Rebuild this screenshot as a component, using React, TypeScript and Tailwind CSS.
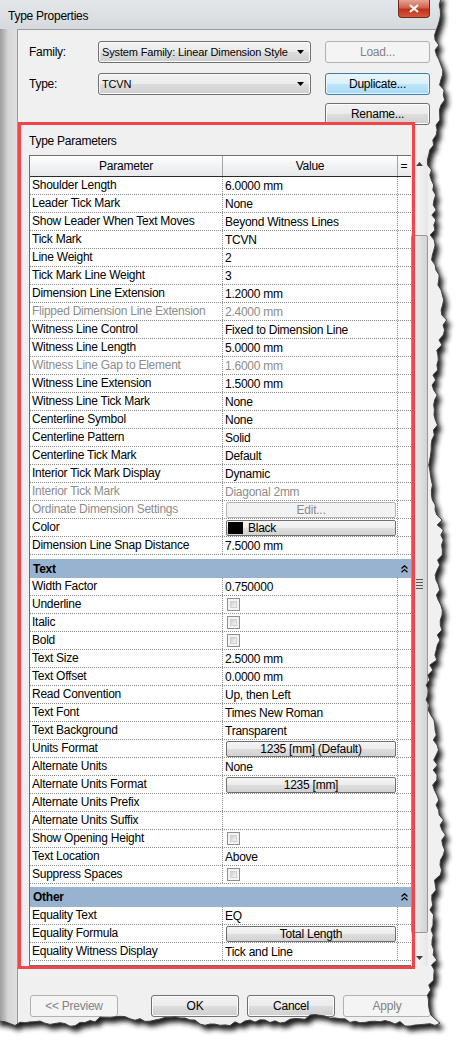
import React from 'react';

type Row =
  | { kind: 'group'; label: string; gap: string }
  | { kind: 'text'; label: string; value: string; disabled?: boolean }
  | { kind: 'check'; label: string }
  | { kind: 'button'; label: string; value: string; disabled?: boolean; swatch?: boolean };

const ROWS: Row[] = [
  { kind: 'text', label: 'Shoulder Length', value: '6.0000 mm' },
  { kind: 'text', label: 'Leader Tick Mark', value: 'None' },
  { kind: 'text', label: 'Show Leader When Text Moves', value: 'Beyond Witness Lines' },
  { kind: 'text', label: 'Tick Mark', value: 'TCVN' },
  { kind: 'text', label: 'Line Weight', value: '2' },
  { kind: 'text', label: 'Tick Mark Line Weight', value: '3' },
  { kind: 'text', label: 'Dimension Line Extension', value: '1.2000 mm' },
  { kind: 'text', label: 'Flipped Dimension Line Extension', value: '2.4000 mm', disabled: true },
  { kind: 'text', label: 'Witness Line Control', value: 'Fixed to Dimension Line' },
  { kind: 'text', label: 'Witness Line Length', value: '5.0000 mm' },
  { kind: 'text', label: 'Witness Line Gap to Element', value: '1.6000 mm', disabled: true },
  { kind: 'text', label: 'Witness Line Extension', value: '1.5000 mm' },
  { kind: 'text', label: 'Witness Line Tick Mark', value: 'None' },
  { kind: 'text', label: 'Centerline Symbol', value: 'None' },
  { kind: 'text', label: 'Centerline Pattern', value: 'Solid' },
  { kind: 'text', label: 'Centerline Tick Mark', value: 'Default' },
  { kind: 'text', label: 'Interior Tick Mark Display', value: 'Dynamic' },
  { kind: 'text', label: 'Interior Tick Mark', value: 'Diagonal 2mm', disabled: true },
  { kind: 'button', label: 'Ordinate Dimension Settings', value: 'Edit...', disabled: true },
  { kind: 'button', label: 'Color', value: 'Black', swatch: true },
  { kind: 'text', label: 'Dimension Line Snap Distance', value: '7.5000 mm' },
  { kind: 'group', label: 'Text', gap: 'border-t-[4px]' },
  { kind: 'text', label: 'Width Factor', value: '0.750000' },
  { kind: 'check', label: 'Underline' },
  { kind: 'check', label: 'Italic' },
  { kind: 'check', label: 'Bold' },
  { kind: 'text', label: 'Text Size', value: '2.5000 mm' },
  { kind: 'text', label: 'Text Offset', value: '0.0000 mm' },
  { kind: 'text', label: 'Read Convention', value: 'Up, then Left' },
  { kind: 'text', label: 'Text Font', value: 'Times New Roman' },
  { kind: 'text', label: 'Text Background', value: 'Transparent' },
  { kind: 'button', label: 'Units Format', value: '1235 [mm] (Default)' },
  { kind: 'text', label: 'Alternate Units', value: 'None' },
  { kind: 'button', label: 'Alternate Units Format', value: '1235 [mm]' },
  { kind: 'text', label: 'Alternate Units Prefix', value: '' },
  { kind: 'text', label: 'Alternate Units Suffix', value: '' },
  { kind: 'check', label: 'Show Opening Height' },
  { kind: 'text', label: 'Text Location', value: 'Above' },
  { kind: 'check', label: 'Suppress Spaces' },
  { kind: 'group', label: 'Other', gap: 'border-t-[3px]' },
  { kind: 'text', label: 'Equality Text', value: 'EQ' },
  { kind: 'button', label: 'Equality Formula', value: 'Total Length' },
  { kind: 'text', label: 'Equality Witness Display', value: 'Tick and Line' },
];

// torn paper edge, right and bottom
function noise(i: number) {
  const x = Math.sin(i * 127.1 + 311.7) * 43758.5453;
  return x - Math.floor(x);
}
const EDGE: [number, number][] = [];
for (let y = 0; y <= 1018; y += 5) {
  EDGE.push([436 + 5 * Math.sin(y / 41) + 3 * Math.sin(y / 17 + 2) + (noise(y) - 0.5) * 6, y]);
}
for (let x = 440; x >= -5; x -= 5) {
  EDGE.push([x, 1021 + 3 * Math.sin(x / 29) + 2 * Math.sin(x / 11 + 1) + (noise(x + 999) - 0.5) * 4]);
}
const EDGE_LINE = EDGE.map(([x, y], i) => `${i ? 'L' : 'M'}${x.toFixed(1)},${y.toFixed(1)}`).join(' ');
const PAPER = `M-5,-5 L${EDGE[0][0].toFixed(1)},-5 ${EDGE_LINE.replace(/^M/, 'L')} L-5,-5 Z`;

function TornEdge() {
  return (
    <svg className="pointer-events-none absolute left-0 top-0" width={466} height={1054}>
      <defs>
        <clipPath id="outside">
          <path clipRule="evenodd" d={`M-10,-10 H480 V1070 H-10 Z ${PAPER}`} />
        </clipPath>
        <filter id="blur" x="-10%" y="-10%" width="120%" height="120%">
          <feGaussianBlur stdDeviation="2.4" />
        </filter>
      </defs>
      <g clipPath="url(#outside)">
        <rect x={-10} y={-10} width={490} height={1080} fill="#ffffff" />
        <path d={PAPER} transform="translate(4,5)" fill="#1e1e1e" filter="url(#blur)" />
      </g>
      <path d={EDGE_LINE} fill="none" stroke="#444" strokeWidth={1} />
    </svg>
  );
}

function WinButton({
  children,
  disabled,
  focused,
  className = '',
}: {
  children: React.ReactNode;
  disabled?: boolean;
  focused?: boolean;
  className?: string;
}) {
  const look = disabled
    ? 'border-[#adb2b5] bg-[#f4f4f4] text-[#838383]'
    : focused
      ? 'border-[#3c7fb1] bg-[linear-gradient(#eaf6fd_0%,#d9f0fc_50%,#bee6fd_51%,#a7d9f5_100%)] text-black shadow-[inset_0_0_0_1px_#e6f5fd]'
      : 'border-[#707070] bg-[linear-gradient(#f2f2f2_0%,#ebebeb_50%,#dddddd_51%,#cfcfcf_100%)] text-black shadow-[inset_0_0_0_1px_#fcfcfc]';
  return (
    <div className={`flex h-[22px] items-center justify-center rounded-[3px] border ${look} ${className}`}>
      {children}
    </div>
  );
}

function Combo({ value }: { value: string }) {
  return (
    <div className="flex h-[22px] w-[213px] items-center rounded-[3px] border border-[#707070] bg-[linear-gradient(#f2f2f2_0%,#ebebeb_50%,#dddddd_51%,#cfcfcf_100%)] pl-[3px] pr-[6px] shadow-[inset_0_0_0_1px_#fcfcfc]">
      <span className="flex-1 overflow-hidden whitespace-nowrap text-[11px] tracking-[-0.15px]">{value}</span>
      <svg width="7" height="4" viewBox="0 0 7 4" className="ml-[4px] shrink-0">
        <path d="M0 0 H7 L3.5 4 Z" fill="#000" />
      </svg>
    </div>
  );
}

function Checkbox() {
  return (
    <div className="ml-[2px] h-[13px] w-[13px] border border-[#8e8f8f] bg-[#f4f4f4] p-[2px]">
      <div className="h-full w-full border border-[#d0d0d0] bg-[linear-gradient(135deg,#cbcfd5,#f6f6f6)]" />
    </div>
  );
}

function CellButton({ value, disabled, swatch }: { value: string; disabled?: boolean; swatch?: boolean }) {
  return (
    <div
      className={`mx-[1px] flex h-[16px] w-[172px] items-center rounded-[2px] border ${
        disabled
          ? 'border-[#b5b5b5] bg-[#f3f3f3] text-[#8a8a8a]'
          : 'border-[#707070] bg-[linear-gradient(#f6f6f6_0%,#ececec_50%,#dedede_51%,#d2d2d2_100%)] text-black'
      } ${swatch ? 'justify-start pl-[1px]' : 'justify-center'}`}
    >
      {swatch && <div className="mr-[5px] h-[12px] w-[15px] bg-black" />}
      {value}
    </div>
  );
}

function DoubleChevron() {
  return (
    <svg width="7" height="8" viewBox="0 0 7 8">
      <path d="M0.5 3.5 L3.5 0.8 L6.5 3.5 M0.5 7.2 L3.5 4.5 L6.5 7.2" fill="none" stroke="#000" strokeWidth="1.3" />
    </svg>
  );
}

function TableRow({ row }: { row: Row }) {
  if (row.kind === 'group') {
    return (
      <div className={`flex h-[23px] items-center border-white bg-[#98b3cf] ${row.gap}`}>
        <span className="w-[368px] pl-[3px] font-bold">{row.label}</span>
        <span className="flex w-[12px] justify-center">
          <DoubleChevron />
        </span>
      </div>
    );
  }
  const grey = row.kind === 'text' && row.disabled;
  const greyLabel = grey || (row.kind === 'button' && row.disabled);
  return (
    <div className="grid h-[18px] grid-cols-[193px_175px_12px] border-b border-dotted border-[#8a8a8a]">
      <div
        className={`overflow-hidden whitespace-nowrap border-r border-dotted border-[#8a8a8a] pl-[2px] leading-[17px] ${
          greyLabel ? 'text-[#8c8c8c]' : ''
        }`}
      >
        {row.label}
      </div>
      <div className="flex items-center overflow-hidden whitespace-nowrap border-r border-dotted border-[#8a8a8a] pl-[2px]">
        {row.kind === 'text' && <span className={grey ? 'text-[#8c8c8c]' : ''}>{row.value}</span>}
        {row.kind === 'check' && <Checkbox />}
        {row.kind === 'button' && <CellButton value={row.value} disabled={row.disabled} swatch={row.swatch} />}
      </div>
      <div />
    </div>
  );
}

function Scrollbar() {
  return (
    <div className="flex w-[17px] flex-col bg-[linear-gradient(90deg,#e3e3e3,#f3f3f3_40%,#e6e6e6)]">
      <div className="flex h-[17px] items-center justify-center">
        <svg width="7" height="4" viewBox="0 0 7 4">
          <path d="M0 4 H7 L3.5 0 Z" fill="#404040" />
        </svg>
      </div>
      <div className="mt-[63px] flex h-[698px] items-center justify-center rounded-[2px] border border-[#979797] bg-[linear-gradient(90deg,#f3f3f3,#e2e2e2_50%,#d3d3d3)]">
        <div className="flex flex-col gap-[2px]">
          <div className="h-[1px] w-[7px] bg-[#555]" />
          <div className="h-[1px] w-[7px] bg-[#555]" />
          <div className="h-[1px] w-[7px] bg-[#555]" />
          <div className="h-[1px] w-[7px] bg-[#555]" />
        </div>
      </div>
      <div className="flex-1" />
      <div className="flex h-[17px] items-center justify-center">
        <svg width="7" height="4" viewBox="0 0 7 4">
          <path d="M0 0 H7 L3.5 4 Z" fill="#404040" />
        </svg>
      </div>
    </div>
  );
}

export default function App() {
  return (
    <div className="relative h-[1054px] w-[466px] overflow-hidden bg-white font-['Liberation_Sans',Arial,sans-serif] text-[12px] tracking-[-0.25px] text-black">
      {/* window frame */}
      <div className="flex h-[1030px] w-[452px] flex-col bg-[linear-gradient(90deg,#9c9c9c_0px,#b8b8b8_4px,#d6d6d6_8px,#dedede_17px)]">
        {/* title bar */}
        <div className="flex h-[29px] items-start bg-[linear-gradient(#e4e7ea,#d5d9dd)]">
          <span className="pl-[8px] pt-[7px] text-[12px] text-black">Type Properties</span>
          <div className="flex-1" />
          <div className="mr-[22px] flex h-[18px] w-[32px] items-center justify-center rounded-b-[4px] border border-t-0 border-[#6d2a22] bg-[linear-gradient(#e8a493,#d1624d_45%,#c0311b_55%,#d55a3f)]">
            <svg width="10" height="9" viewBox="0 0 10 9">
              <path d="M1 1 L9 8 M9 1 L1 8" stroke="#fff" strokeWidth="2.2" />
            </svg>
          </div>
        </div>
        {/* client area */}
        <div className="relative ml-[17px] flex flex-1 flex-col border-l border-t border-[#9a9a9a] bg-[#f0f0f0]">
          <div className="flex flex-col pl-[11px] pt-[11px]">
            <div className="flex h-[22px] items-center">
              <span className="w-[69px]">Family:</span>
              <Combo value="System Family: Linear Dimension Style" />
              <div className="w-[14px]" />
              <WinButton disabled className="w-[105px]">
                Load...
              </WinButton>
            </div>
            <div className="mt-[10px] flex h-[22px] items-center">
              <span className="w-[69px]">Type:</span>
              <Combo value="TCVN" />
              <div className="w-[14px]" />
              <WinButton focused className="w-[105px]">
                Duplicate...
              </WinButton>
            </div>
            <div className="mt-[8px] flex h-[22px]">
              <div className="w-[296px]" />
              <WinButton className="w-[105px]">Rename...</WinButton>
            </div>
            <div className="mt-[9px] h-[14px] leading-[14px]">Type Parameters</div>
            {/* parameter grid */}
            <div className="mt-[7px] flex h-[811px]">
              <div className="flex w-[382px] flex-col border border-r-0 border-[#6e6e6e] bg-white">
                <div className="grid h-[21px] grid-cols-[193px_175px_12px] border-b border-[#2a2a2a] bg-[linear-gradient(#ffffff,#f1f2f4_50%,#e8e9eb)]">
                  <div className="flex items-center justify-center border-r border-[#a5a5a5]">Parameter</div>
                  <div className="flex items-center justify-center border-r border-[#a5a5a5]">Value</div>
                  <div className="flex items-center justify-center">=</div>
                </div>
                {ROWS.map((row, i) => (
                  <TableRow key={i} row={row} />
                ))}
              </div>
              <Scrollbar />
            </div>
          </div>
          {/* bottom buttons */}
          <div className="mt-[29px] flex pl-[12px]">
            <WinButton disabled className="w-[88px]">
              &lt;&lt; Preview
            </WinButton>
            <div className="w-[33px]" />
            <WinButton className="w-[88px]">OK</WinButton>
            <div className="w-[8px]" />
            <WinButton className="w-[88px]">Cancel</WinButton>
            <div className="w-[8px]" />
            <WinButton disabled className="w-[88px]">
              Apply
            </WinButton>
          </div>
          {/* red annotation box */}
          <div className="absolute left-[0px] top-[92px] h-[847px] w-[397px] border-[3px] border-[#f2444a]" />
        </div>
      </div>
      <TornEdge />
    </div>
  );
}
